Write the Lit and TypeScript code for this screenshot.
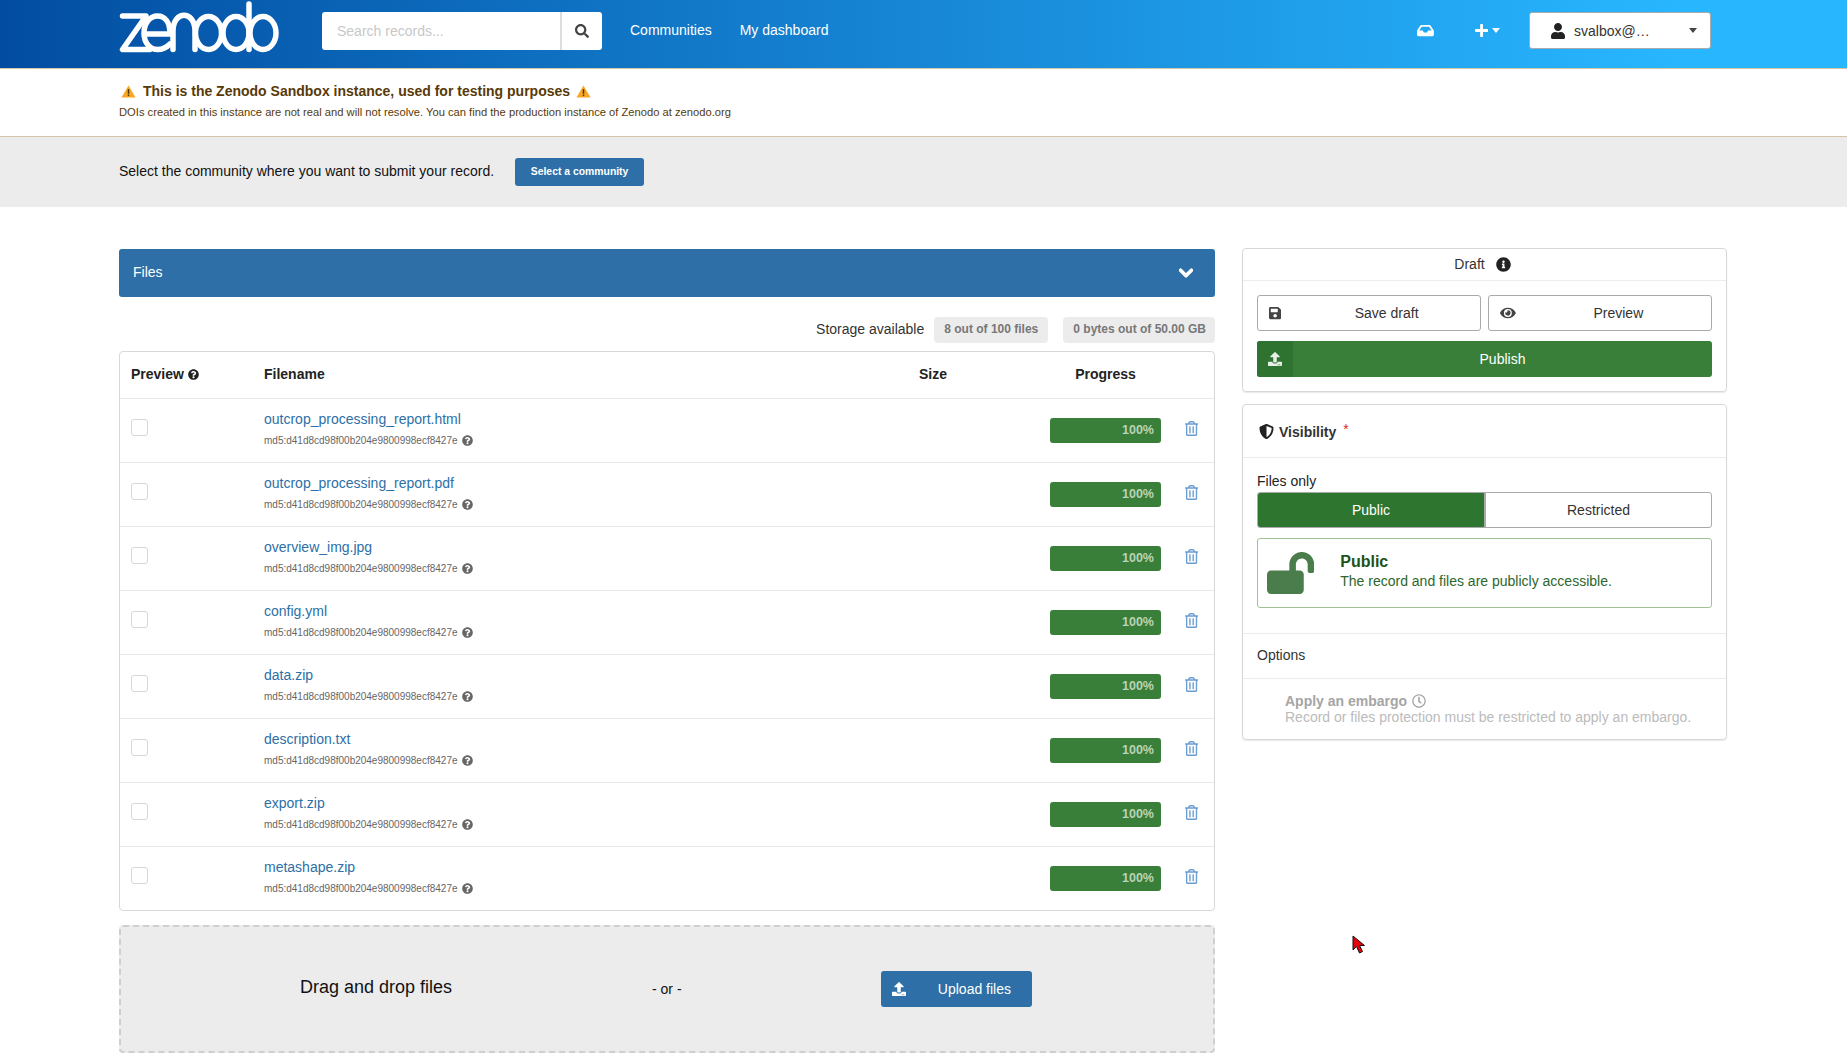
import { LitElement, html, css } from "lit";
import { customElement } from "lit/decorators.js";

const ICONS: Record<string, [number, string]> = {
  search: [512, "M505 442.7L405.3 343c-4.5-4.5-10.6-7-17-7H372c27.6-35.3 44-79.7 44-128C416 93.1 322.9 0 208 0S0 93.1 0 208s93.1 208 208 208c48.3 0 92.7-16.4 128-44v16.3c0 6.4 2.5 12.5 7 17l99.7 99.7c9.4 9.4 24.6 9.4 33.9 0l28.3-28.3c9.4-9.4 9.4-24.6.1-34zM208 336c-70.7 0-128-57.2-128-128 0-70.7 57.2-128 128-128 70.7 0 128 57.2 128 128 0 70.7-57.2 128-128 128z"],
  inbox: [576, "M567.938 243.908L462.25 85.374A48.003 48.003 0 0 0 422.311 64H153.689a48 48 0 0 0-39.938 21.374L8.062 243.908A47.994 47.994 0 0 0 0 270.533V400c0 26.51 21.49 48 48 48h480c26.51 0 48-21.49 48-48V270.533a47.994 47.994 0 0 0-8.062-26.625zM162.252 128h251.497l85.333 128H376l-32 64H232l-32-64H76.918l85.334-128z"],
  plus: [448, "M416 208H272V64c0-17.67-14.33-32-32-32h-32c-17.67 0-32 14.33-32 32v144H32c-17.67 0-32 14.33-32 32v32c0 17.67 14.33 32 32 32h144v144c0 17.67 14.33 32 32 32h32c17.67 0 32-14.33 32-32V304h144c17.67 0 32-14.33 32-32v-32c0-17.67-14.33-32-32-32z"],
  user: [448, "M224 256c70.7 0 128-57.3 128-128S294.7 0 224 0 96 57.3 96 128s57.3 128 128 128zm89.6 32h-16.7c-22.2 10.2-46.9 16-72.9 16s-50.6-5.8-72.9-16h-16.7C60.2 288 0 348.2 0 422.4V464c0 26.5 21.5 48 48 48h352c26.5 0 48-21.5 48-48v-41.6c0-74.2-60.2-134.4-134.4-134.4z"],
  chevron: [448, "M207.029 381.476L12.686 187.132c-9.373-9.373-9.373-24.569 0-33.941l22.667-22.667c9.357-9.357 24.522-9.375 33.901-.04L224 284.505l154.745-154.021c9.379-9.335 24.544-9.317 33.901.04l22.667 22.667c9.373 9.373 9.373 24.569 0 33.941L240.971 381.476c-9.373 9.372-24.569 9.372-33.942 0z"],
  help: [512, "M504 256c0 136.997-111.043 248-248 248S8 392.997 8 256C8 119.083 119.043 8 256 8s248 111.083 248 248zM262.655 90c-54.497 0-89.255 22.957-116.549 63.758-3.536 5.286-2.353 12.415 2.715 16.258l34.699 26.31c5.205 3.947 12.621 3.008 16.665-2.122 17.864-22.658 30.113-35.797 57.303-35.797 20.429 0 45.698 13.148 45.698 32.958 0 14.976-12.363 22.667-32.534 33.976C247.128 238.528 216 254.941 216 296v4c0 6.627 5.373 12 12 12h56c6.627 0 12-5.373 12-12v-1.333c0-28.462 83.186-29.647 83.186-106.667 0-58.002-60.165-102-116.531-102zM256 338c-25.365 0-46 20.635-46 46 0 25.364 20.635 46 46 46s46-20.636 46-46c0-25.365-20.635-46-46-46z"],
  info: [512, "M256 8C119.043 8 8 119.083 8 256c0 136.997 111.043 248 248 248s248-111.003 248-248C504 119.083 392.957 8 256 8zm0 110c23.196 0 42 18.804 42 42s-18.804 42-42 42-42-18.804-42-42 18.804-42 42-42zm56 254c0 6.627-5.373 12-12 12h-88c-6.627 0-12-5.373-12-12v-24c0-6.627 5.373-12 12-12h12v-64h-12c-6.627 0-12-5.373-12-12v-24c0-6.627 5.373-12 12-12h64c6.627 0 12 5.373 12 12v100h12c6.627 0 12 5.373 12 12v24z"],
  trash: [448, "M268 416h24a12 12 0 0 0 12-12V188a12 12 0 0 0-12-12h-24a12 12 0 0 0-12 12v216a12 12 0 0 0 12 12zM432 80h-82.41l-34-56.7A48 48 0 0 0 274.41 0H173.59a48 48 0 0 0-41.16 23.3L98.41 80H16A16 16 0 0 0 0 96v16a16 16 0 0 0 16 16h16v336a48 48 0 0 0 48 48h288a48 48 0 0 0 48-48V128h16a16 16 0 0 0 16-16V96a16 16 0 0 0-16-16zM171.84 50.91A6 6 0 0 1 177 48h94a6 6 0 0 1 5.15 2.91L293.61 80H154.39zM368 464H80V128h288zm-212-48h24a12 12 0 0 0 12-12V188a12 12 0 0 0-12-12h-24a12 12 0 0 0-12 12v216a12 12 0 0 0 12 12z"],
  save: [448, "M433.941 129.941l-83.882-83.882A48 48 0 0 0 316.118 32H48C21.49 32 0 53.49 0 80v352c0 26.51 21.49 48 48 48h352c26.51 0 48-21.49 48-48V163.882a48 48 0 0 0-14.059-33.941zM224 416c-35.346 0-64-28.654-64-64 0-35.346 28.654-64 64-64s64 28.654 64 64c0 35.346-28.654 64-64 64zm96-304.52V212c0 6.627-5.373 12-12 12H76c-6.627 0-12-5.373-12-12V108c0-6.627 5.373-12 12-12h228.52c3.183 0 6.235 1.264 8.485 3.515l3.48 3.48A11.996 11.996 0 0 1 320 111.48z"],
  eye: [576, "M572.52 241.4C518.29 135.59 410.93 64 288 64S57.68 135.64 3.48 241.41a32.35 32.35 0 0 0 0 29.19C57.71 376.41 165.07 448 288 448s230.32-71.64 284.52-177.41a32.35 32.35 0 0 0 0-29.19zM288 400a144 144 0 1 1 144-144 143.93 143.93 0 0 1-144 144zm0-240a95.31 95.31 0 0 0-25.31 3.79 47.85 47.85 0 0 1-66.9 66.9A95.78 95.78 0 1 0 288 160z"],
  upload: [512, "M296 384h-80c-13.3 0-24-10.7-24-24V192h-87.7c-17.8 0-26.7-21.5-14.1-34.1L242.3 5.7c7.5-7.5 19.8-7.5 27.3 0l152.2 152.2c12.6 12.6 3.7 34.1-14.1 34.1H320v168c0 13.3-10.7 24-24 24zm216-8v112c0 13.3-10.7 24-24 24H24c-13.3 0-24-10.7-24-24V376c0-13.3 10.7-24 24-24h136v8c0 30.9 25.1 56 56 56h80c30.9 0 56-25.1 56-56v-8h136c13.3 0 24 10.7 24 24zm-124 88c0-11-9-20-20-20s-20 9-20 20 9 20 20 20 20-9 20-20zm64 0c0-11-9-20-20-20s-20 9-20 20 9 20 20 20 20-9 20-20z"],
  shield: [512, "M466.5 83.7l-192-80a48.15 48.15 0 0 0-36.9 0l-192 80C27.7 91.1 16 108.6 16 128c0 198.5 114.5 335.7 221.5 380.3 11.8 4.9 25.1 4.9 36.9 0C360.1 472.6 496 349.3 496 128c0-19.4-11.7-36.9-29.5-44.3zM256.1 446.3l-.1-381 175.9 73.3c-3.3 151.4-82.1 261.1-175.8 307.7z"],
  unlock: [576, "M423.5 0C339.5.3 272 69.5 272 153.5V224H48c-26.5 0-48 21.5-48 48v192c0 26.5 21.5 48 48 48h352c26.5 0 48-21.5 48-48V272c0-26.5-21.5-48-48-48h-48v-71.1c0-39.6 31.7-72.5 71.3-72.9 40-.4 72.7 32.1 72.7 72v80c0 13.3 10.7 24 24 24h32c13.3 0 24-10.7 24-24v-80C576 68 507.5-.3 423.5 0z"],
  clock: [512, "M256 8C119 8 8 119 8 256s111 248 248 248 248-111 248-248S393 8 256 8zm0 448c-110.5 0-200-89.5-200-200S145.5 56 256 56s200 89.5 200 200-89.5 200-200 200zm61.8-104.4l-84.9-61.7c-3.1-2.3-4.9-5.9-4.9-9.7V116c0-6.6 5.4-12 12-12h32c6.6 0 12 5.4 12 12v141.7l66.8 48.6c5.4 3.9 6.5 11.4 2.6 16.8L334.6 349c-3.9 5.3-11.4 6.5-16.8 2.6z"],
};

const icon = (name: string, cls = "") => {
  const [w, d] = ICONS[name];
  return html`<svg class="icon ${cls}" viewBox="0 0 ${w} 512" fill="currentColor"><path d=${d}></path></svg>`;
};

const warn = html`<svg class="warn" viewBox="0 0 16 14">
  <path d="M8 .5 15.6 13.5H.4Z" fill="#f9a825"></path>
  <rect x="7.2" y="4.5" width="1.6" height="5" fill="#4a3306"></rect>
  <rect x="7.2" y="10.4" width="1.6" height="1.6" fill="#4a3306"></rect>
</svg>`;

const FILES = [
  "outcrop_processing_report.html",
  "outcrop_processing_report.pdf",
  "overview_img.jpg",
  "config.yml",
  "data.zip",
  "description.txt",
  "export.zip",
  "metashape.zip",
];

@customElement("app-root")
export class AppRoot extends LitElement {
  static styles = css`
    :host {
      display: block;
      position: relative;
      width: 1847px;
      height: 1053px;
      overflow: hidden;
      background: #fff;
      color: #222;
      font: 14px/20px "Liberation Sans", Arial, sans-serif;
    }
    * { box-sizing: border-box; }
    .icon { display: block; height: 14px; flex: none; }

    .topbar {
      display: flex;
      align-items: center;
      height: 69px;
      padding: 0 0 7px 119px;
      border-bottom: 1px solid #d4c5a5;
      background: linear-gradient(to right, #024da2 0, #28b6ff 1675px);
      color: #fff;
    }
    .logo { width: 165px; height: 68px; flex: none; align-self: flex-start; }
    .search {
      display: flex;
      width: 280px;
      height: 38px;
      margin: 0 28px 0 38px;
      background: #fff;
      border-radius: 3px;
      color: #c8c8c8;
    }
    .search span { flex: 1; padding: 10px 15px 0; line-height: 18px; }
    .search div {
      display: flex;
      align-items: center;
      justify-content: center;
      width: 42px;
      border-left: 2px solid #ddd;
      color: #444;
    }
    .search .icon { height: 14px; }
    .nav { margin: -1px 28px 0 0; }
    .nav-right { display: flex; align-items: center; margin-left: auto; padding-right: 136px; }
    .nav-right .inbox { height: 15px; }
    .plus { display: flex; align-items: center; gap: 4px; margin: 0 29px 0 41px; }
    .plus .icon { height: 15px; }
    .caret { width: 0; height: 0; border: 4.5px solid transparent; border-bottom: 0; border-top: 5px solid currentColor; }
    .user {
      display: flex;
      align-items: center;
      width: 182px;
      height: 37px;
      padding: 0 13px 0 21px;
      background: #fff;
      border: 1px solid #aaa;
      border-radius: 3px;
      color: #333;
    }
    .user .icon { height: 16px; margin-right: 9px; color: #222; }
    .user span { flex: 1; }
    .user .caret { flex: none; color: #444; }

    .banner { height: 68px; padding: 11px 119px 0; border-bottom: 1px solid #d4c5a5; color: #573a08; }
    .banner-title { display: flex; align-items: center; gap: 7px; padding-left: 2px; font-weight: 700; line-height: 22px; }
    .banner-title svg:last-child { margin-left: -1px; }
    .warn { width: 15px; height: 13px; flex: none; }
    .banner-sub { margin-top: 2px; font-size: 11.2px; line-height: 16px; }

    .community {
      display: flex;
      align-items: center;
      gap: 21px;
      height: 70px;
      padding: 0 119px;
      background: #ececed;
      color: #111;
    }
    .community span { margin-top: -2px; }
    .btn-community {
      width: 129px;
      height: 28px;
      background: #2d6fa6;
      color: #fff;
      border-radius: 3px;
      font-size: 10.4px;
      font-weight: 700;
      line-height: 27px;
      text-align: center;
    }

    .main {
      display: grid;
      grid-template-columns: 1096px 485px;
      gap: 27px;
      padding: 42px 120px 0 119px;
    }
    .files-bar {
      display: flex;
      align-items: center;
      justify-content: space-between;
      height: 48px;
      padding: 0 22px 0 14px;
      background: #2d6fa6;
      border-radius: 3px;
      color: #fff;
    }
    .files-bar span { margin-top: -3px; }
    .files-bar .icon { height: 16px; stroke: currentColor; stroke-width: 40; }
    .storage { display: flex; align-items: center; justify-content: flex-end; margin: 20px 0 8px; height: 26px; color: #333; }
    .storage span { margin-top: -2px; }
    .storage b {
      height: 26px;
      margin-left: 10px;
      padding: 0 10px;
      background: #ececed;
      border-radius: 4px;
      color: #777;
      font-size: 12px;
      line-height: 25px;
    }
    .storage b + b { margin-left: 15px; padding: 0 9px 0 10px; }

    .table { border: 1px solid #d8d8d8; border-radius: 4px; }
    .row {
      display: grid;
      grid-template-columns: 133px 655px 131px 111px 1fr;
      align-items: center;
      height: 64px;
      padding-left: 11px;
      border-top: 1px solid #e8e8e8;
    }
    .row.head { height: 46px; padding-bottom: 2px; border-top: 0; font-weight: 700; }
    .head-help { display: flex; align-items: center; gap: 4px; }
    .head-help .icon { height: 11px; }
    .head-progress { text-align: center; }
    .check { width: 17px; height: 17px; margin-top: -6px; border: 1px solid #d8d8d8; border-radius: 3px; background: #fff; }
    .name { display: block; color: #2d6fa6; line-height: 18px; margin-top: -3px; }
    .md5 { display: flex; align-items: center; gap: 4px; margin-top: 6px; color: #666; font-size: 10px; line-height: 14px; }
    .md5 .icon { height: 11px; margin-top: -1px; color: #666; }
    .bar {
      grid-column: 4;
      height: 25px;
      padding-right: 7px;
      background: #3a7f39;
      border-radius: 3px;
      color: #b9d4ba;
      font-size: 12.5px;
      font-weight: 700;
      line-height: 25px;
      text-align: right;
    }
    .del { margin: -4px 0 0 24px; color: #6b9fd1; }
    .del .icon { height: 15px; }

    .drop {
      display: grid;
      grid-template-columns: 381px 379px 1fr;
      align-items: center;
      height: 128px;
      margin-top: 14px;
      background: #ececed;
      border: 2px dashed #cfcfcf;
      border-radius: 4px;
      color: #111;
    }
    .drop-text { padding-left: 179px; font-size: 18px; line-height: 24px; margin-top: -4px; white-space: nowrap; }
    .drop-or { padding-left: 150px; }
    .btn-upload {
      display: flex;
      align-items: center;
      width: 151px;
      height: 36px;
      padding: 0 21px 0 11px;
      background: #2d6fa6;
      border-radius: 3px;
      color: #fff;
    }
    .btn-upload .icon { height: 14px; }
    .btn-upload span { margin-left: auto; }

    aside { margin-top: -1px; }
    .card { border: 1px solid #d8d8d8; border-radius: 4px; margin-bottom: 12px; box-shadow: 0 1px 1px rgba(34, 36, 38, 0.1); }
    .draft-head { display: flex; align-items: center; justify-content: center; gap: 11px; height: 32px; padding: 0 4px 1px 0; border-bottom: 1px solid #ececec; color: #333; }
    .draft-head .icon { height: 15px; color: #222; }
    .draft-body { display: grid; grid-template-columns: 1fr 1fr; gap: 10px 7px; padding: 14px 14px 14px; }
    .btn {
      display: flex;
      align-items: center;
      height: 36px;
      background: #fff;
      border: 1px solid #aaa;
      border-radius: 3px;
      color: #333;
    }
    .btn .icon { margin-left: 11px; color: #444; height: 14px; }
    .btn span { flex: 1; padding-left: 12px; text-align: center; }
    .btn .preview-label { padding-left: 10px; }
    .btn.publish { grid-column: 1 / 3; background: #3a7f39; border: 0; color: #fff; }
    .btn.publish span { padding-left: 0; }
    .publish-icon { display: flex; align-items: center; justify-content: center; width: 36px; height: 36px; background: #2f7331; border-radius: 3px 0 0 3px; }
    .btn.publish .icon { margin: 0; color: #e6f0e6; }
    .vis-head { display: flex; align-items: center; gap: 5px; height: 53px; padding-left: 16px; border-bottom: 1px solid #ececec; font-weight: 700; color: #333; }
    .vis-head .icon { height: 15px; color: #222; }
    .vis-head span { margin-top: 1px; }
    .vis-head i { margin: -4px 0 0 2px; color: #db2828; font-style: normal; font-weight: 400; }
    .vis-body { padding: 13px 14px 25px; border-bottom: 1px solid #ececec; }
    .vis-label { line-height: 20px; color: #222; }
    .toggle { display: grid; grid-template-columns: 228px 1fr; height: 36px; margin-top: 1px; border: 1px solid #aaa; border-radius: 3px; overflow: hidden; color: #333; text-align: center; line-height: 34px; }
    .toggle .on { background: #2e7530; color: #fff; border-right: 2px solid #aaa; }
    .message {
      display: flex;
      align-items: center;
      height: 70px;
      margin-top: 10px;
      padding-left: 9px;
      border: 1px solid #a3c293;
      border-radius: 3px;
      color: #2c662d;
    }
    .message .icon { height: 42px; opacity: 0.85; color: #2c662d; }
    .message-text { margin: -4px 0 0 26px; }
    .message-text b { display: block; color: #1a531b; font-size: 16px; line-height: 19px; }
    .options { height: 45px; padding: 0 14px; border-bottom: 1px solid #ececec; line-height: 43px; color: #333; }
    .embargo { padding: 14px 14px 11px 42px; height: 60px; line-height: 16px; color: #bbb; }
    .embargo b { display: flex; align-items: center; gap: 5px; color: #a5a5a5; }
    .embargo .icon { height: 14px; }

    .cursor { position: absolute; left: 1352px; top: 935px; width: 14px; height: 20px; }
  `;

  private renderRow(name: string) {
    return html`
      <div class="row">
        <div class="check"></div>
        <div>
          <a class="name">${name}</a>
          <div class="md5">md5:d41d8cd98f00b204e9800998ecf8427e ${icon("help")}</div>
        </div>
        <div class="bar">100%</div>
        <div class="del">${icon("trash")}</div>
      </div>
    `;
  }

  render() {
    return html`
      <header class="topbar">
        <svg class="logo" viewBox="0 0 165 68" fill="none" stroke="#fff" stroke-width="5.500" stroke-linecap="round" stroke-linejoin="round" role="img" aria-label="Zenodo">
          <path d="M3.500 16H27L3.500 49.500H31"></path>
          <path d="M25 34H51C51 22 46 16 38.500 16C31 16 25 23 25 33C25 43 31 49.500 38.500 49.500C44 49.500 48 47 51 44"></path>
          <path d="M54 49.500V31C54 10 76 10 76 31V49.500"></path>
          <ellipse cx="89.500" cy="33" rx="13" ry="16.500"></ellipse>
          <ellipse cx="117" cy="33" rx="13" ry="16.500"></ellipse>
          <path d="M130 4V49.500"></path>
          <ellipse cx="144" cy="33" rx="13" ry="16.500"></ellipse>
        </svg>
        <div class="search">
          <span>Search records...</span>
          <div>${icon("search")}</div>
        </div>
        <span class="nav">Communities</span>
        <span class="nav">My dashboard</span>
        <div class="nav-right">
          ${icon("inbox", "inbox")}
          <div class="plus">${icon("plus")}<span class="caret"></span></div>
          <div class="user">${icon("user")}<span>svalbox@…</span><i class="caret"></i></div>
        </div>
      </header>

      <section class="banner">
        <div class="banner-title">${warn}<span>This is the Zenodo Sandbox instance, used for testing purposes</span>${warn}</div>
        <div class="banner-sub">DOIs created in this instance are not real and will not resolve. You can find the production instance of Zenodo at zenodo.org</div>
      </section>

      <section class="community">
        <span>Select the community where you want to submit your record.</span>
        <div class="btn-community">Select a community</div>
      </section>

      <main class="main">
        <div>
          <div class="files-bar"><span>Files</span>${icon("chevron")}</div>
          <div class="storage">
            <span>Storage available</span>
            <b>8 out of 100 files</b>
            <b>0 bytes out of 50.00 GB</b>
          </div>
          <div class="table">
            <div class="row head">
              <div class="head-help">Preview ${icon("help")}</div>
              <div>Filename</div>
              <div>Size</div>
              <div class="head-progress">Progress</div>
            </div>
            ${FILES.map((f) => this.renderRow(f))}
          </div>
          <div class="drop">
            <div class="drop-text">Drag and drop files</div>
            <div class="drop-or">- or -</div>
            <div class="btn-upload">${icon("upload")}<span>Upload files</span></div>
          </div>
        </div>

        <aside>
          <div class="card">
            <div class="draft-head"><span>Draft</span>${icon("info")}</div>
            <div class="draft-body">
              <div class="btn">${icon("save")}<span>Save draft</span></div>
              <div class="btn">${icon("eye")}<span class="preview-label">Preview</span></div>
              <div class="btn publish"><div class="publish-icon">${icon("upload")}</div><span>Publish</span></div>
            </div>
          </div>
          <div class="card">
            <div class="vis-head">${icon("shield")}<span>Visibility</span><i>*</i></div>
            <div class="vis-body">
              <div class="vis-label">Files only</div>
              <div class="toggle"><div class="on">Public</div><div>Restricted</div></div>
              <div class="message">
                ${icon("unlock")}
                <div class="message-text"><b>Public</b>The record and files are publicly accessible.</div>
              </div>
            </div>
            <div class="options">Options</div>
            <div class="embargo">
              <b>Apply an embargo ${icon("clock")}</b>
              Record or files protection must be restricted to apply an embargo.
            </div>
          </div>
        </aside>
      </main>

      <svg class="cursor" viewBox="0 0 14 20">
        <path d="M1 1V15L4.500 11.500L7.500 18L10.500 16.500L7.500 10.500H12.500Z" fill="#e8000b" stroke="#111" stroke-width="1"></path>
      </svg>
    `;
  }
}
